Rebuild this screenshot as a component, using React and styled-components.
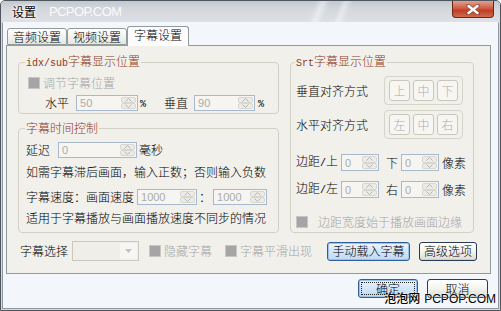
import React from 'react';
import styled, { createGlobalStyle } from 'styled-components';

const Global = createGlobalStyle`
  html, body { margin: 0; padding: 0; background: #ffffff; }
  body {
    width: 501px; height: 311px; overflow: hidden;
    font-family: "Noto Sans CJK SC", "Liberation Sans", sans-serif;
    font-size: 12px; line-height: 14px; color: #000; font-weight: 300;
  }
  * { box-sizing: border-box; }
`;

const Window = styled.div`
  position: relative;
  width: 501px;
  height: 311px;
  border: 1px solid #4f555d;
  border-radius: 5px 5px 0 0;
  background: #d5d9df;
  display: flex;
  flex-direction: column;
  overflow: hidden;
`;

const TitleBar = styled.div`
  flex: none;
  height: 21px;
  display: flex;
  align-items: center;
  padding-left: 11px;
  background:
    linear-gradient(112deg, transparent 62%, rgba(255,255,255,0.45) 63.5%, transparent 65%, transparent 67%, rgba(255,255,255,0.4) 68%, transparent 69.5%),
    linear-gradient(180deg, #c3c8cf 0%, #d3d7dc 35%, #dde0e4 100%);
`;

const TitleText = styled.span`
  font-size: 12px;
  font-weight: 400;
  color: #000;
  text-shadow: 0 0 2px #fff, 0 0 3px #fff, 0 0 4px #fff;
`;

const TitleMark = styled.span`
  margin-left: 13px;
  font-family: "Liberation Sans", sans-serif;
  font-size: 13px;
  font-weight: 400;
  letter-spacing: -0.6px;
  color: rgba(255, 255, 255, 0.9);
`;

const CloseButton = styled.div`
  margin-left: auto;
  margin-right: 6px;
  align-self: flex-start;
  width: 42px;
  height: 17px;
  border: 1px solid #6e2418;
  border-top: none;
  border-radius: 0 0 4px 4px;
  background: linear-gradient(180deg, #e3a08c 0%, #d1664c 40%, #bf3f25 60%, #d06a4f 100%);
  display: flex;
  align-items: center;
  justify-content: center;
`;

const ClientArea = styled.div`
  flex: 1;
  margin: 0 1px 1px;
  border: 1px solid #8f969f;
  border-top-color: #f4f6f9;
  background: #f3f6fb;
  padding: 3px 7px 0 3px;
  display: flex;
  flex-direction: column;
`;

const TabStrip = styled.div`
  flex: none;
  height: 19px;
  display: flex;
  align-items: flex-end;
  padding-left: 1px;
`;

const Tab = styled.div`
  flex: none;
  position: relative;
  height: ${p => (p.$active ? 20 : 17)}px;
  margin-bottom: ${p => (p.$active ? -1 : 0)}px;
  z-index: ${p => (p.$active ? 1 : 0)};
  padding: ${p => (p.$active ? '1px 6px 0' : '0 5px')};
  display: flex;
  align-items: ${p => (p.$active ? 'flex-start' : 'center')};
  border: 1px solid #919b9c;
  border-bottom: ${p => (p.$active ? 'none' : '1px solid #919b9c')};
  border-radius: 3px 3px 0 0;
  background: ${p => (p.$active ? '#fcfcfe' : 'linear-gradient(180deg, #ffffff 0%, #f0f0ec 60%, #e6e5df 100%)')};
  white-space: nowrap;
`;

const Panel = styled.div`
  flex: none;
  height: 229px;
  border: 1px solid #919b9c;
  background: #f1f0eb;
  padding: 8px 0 0 11px;
  display: grid;
  grid-template-columns: 261px 184px;
  grid-template-rows: 179px 20px;
  column-gap: 11px;
  row-gap: 8px;
  align-content: start;
`;

const LeftColumn = styled.div`
  display: flex;
  flex-direction: column;
  gap: 7px;
`;

const Group = styled.fieldset`
  margin: 0;
  min-width: 0;
  height: ${p => p.$h}px;
  padding: 0 ${p => p.$pl}px;
  border: 1px solid #d2d1c6;
  border-radius: 4px;
`;

const Legend = styled.legend`
  padding: 0 1px;
  font-size: 12px;
  line-height: 14px;
  color: #8e3a22;
`;

const Row = styled.div`
  display: flex;
  align-items: center;
  height: ${p => p.$h || 16}px;
  margin-top: ${p => p.$mt || 0}px;
`;

const Text = styled.span`
  flex: none;
  white-space: nowrap;
  margin-left: ${p => p.$ml || 0}px;
  color: ${p => (p.$disabled ? '#a6a6a6' : '#000')};
`;

const Half = styled.span`
  font-family: "Liberation Mono", monospace;
  font-size: 10px;
`;

const CheckBox = styled.span`
  flex: none;
  width: 12px;
  height: 12px;
  margin-left: ${p => p.$ml || 0}px;
  background: #a5a5a5;
  border: 1px solid #c6c6c6;
`;

const SpinBox = styled.div`
  flex: none;
  width: ${p => p.$w}px;
  height: 100%;
  margin-left: ${p => p.$ml || 0}px;
  border: 1px solid #a8b8cd;
  background: #f6f5f1;
  display: flex;
  align-items: stretch;
`;

const SpinValue = styled.span`
  flex: 1;
  padding-left: 3px;
  display: flex;
  align-items: center;
  font-family: "Liberation Sans", sans-serif;
  font-size: 11px;
  font-weight: 400;
  color: #ababab;
`;

const SpinArrows = styled.div`
  flex: none;
  width: 15px;
  margin: 1px;
  display: flex;
  flex-direction: column;
`;

const SpinHalf = styled.div`
  flex: 1;
  display: flex;
  align-items: center;
  justify-content: center;
  background: #ecebe6;
  border: 1px solid #d8d7cf;
  border-radius: 2px;
`;

const AlignFrame = styled.div`
  flex: none;
  height: 29px;
  margin-left: ${p => p.$ml || 0}px;
  padding: 3px 4px;
  display: flex;
  gap: 3px;
  border: 1px solid #d5d4c9;
  border-radius: 4px;
`;

const AlignBtn = styled.span`
  width: 21px;
  height: 21px;
  display: flex;
  align-items: center;
  justify-content: center;
  border: 1px solid #c9c7bb;
  border-radius: 3px;
  background: #f7f6f2;
  color: #adadad;
`;

const BottomRow = styled.div`
  grid-column: 1 / -1;
  display: flex;
  align-items: center;
`;

const Combo = styled.div`
  flex: none;
  width: ${p => p.$w}px;
  height: 20px;
  margin-left: ${p => p.$ml || 0}px;
  border: 1px solid #cbc9bd;
  background: #efeee9;
  display: flex;
  justify-content: flex-end;
`;

const ComboArrow = styled.span`
  width: 17px;
  margin: 1px;
  background: #f6f6f3;
  display: flex;
  align-items: center;
  justify-content: center;
`;

const PushButton = styled.div`
  flex: none;
  width: ${p => p.$w}px;
  height: 19px;
  margin-left: ${p => p.$ml || 0}px;
  display: flex;
  align-items: center;
  justify-content: center;
  color: #000;
  border: 1px solid ${p => (p.$hot ? '#2f5f9a' : '#2a3b55')};
  border-radius: 3px;
  background: ${p => (p.$hot
    ? 'linear-gradient(180deg, #eef5fd 0%, #d3e5f9 50%, #c0d8f4 100%)'
    : 'linear-gradient(180deg, #ffffff 0%, #f3f3ef 50%, #dcdcd6 100%)')};
  box-shadow: ${p => (p.$hot ? 'inset 0 0 0 1px #9cc2ec' : 'inset 0 -1px 0 #cfcfc8')};
  outline: ${p => (p.$focus ? '1px dotted #222' : 'none')};
  outline-offset: -4px;
  white-space: nowrap;
`;

const Footer = styled.div`
  flex: 1;
  display: flex;
  justify-content: flex-end;
  align-items: flex-start;
  padding: 5px 3px 0 0;
  gap: 9px;
`;

const Watermark = styled.div`
  position: absolute;
  right: 4px;
  bottom: 4px;
  display: flex;
  align-items: baseline;
  gap: 4px;
  color: #000;
  text-shadow: 0 0 1px #fff, 0 0 2px #fff;
  pointer-events: none;
`;

const WatermarkCn = styled.span`
  font-size: 12px;
  font-weight: 500;
`;

const WatermarkEn = styled.span`
  font-family: "Liberation Sans", sans-serif;
  font-size: 12px;
  font-weight: 400;
`;

const Up = () => (
  <svg width="7" height="4" viewBox="0 0 7 4">
    <path d="M0.5 3.5 L3.5 0.5 L6.5 3.5" fill="none" stroke="#b4b4b4" strokeWidth="1" />
  </svg>
);
const Down = () => (
  <svg width="7" height="4" viewBox="0 0 7 4">
    <path d="M0.5 0.5 L3.5 3.5 L6.5 0.5" fill="none" stroke="#b4b4b4" strokeWidth="1" />
  </svg>
);

const Spin = ({ w, ml, value }) => (
  <SpinBox $w={w} $ml={ml}>
    <SpinValue>{value}</SpinValue>
    <SpinArrows>
      <SpinHalf><Up /></SpinHalf>
      <SpinHalf><Down /></SpinHalf>
    </SpinArrows>
  </SpinBox>
);

const CloseX = () => (
  <svg width="14" height="11" viewBox="0 0 14 11">
    <path d="M2 1.5 L12 9.5 M12 1.5 L2 9.5" stroke="#6a3a30" strokeWidth="4" strokeLinecap="round" opacity="0.5" />
    <path d="M2.5 2 L11.5 9 M11.5 2 L2.5 9" stroke="#ffffff" strokeWidth="2.4" strokeLinecap="round" />
  </svg>
);

export default function App() {
  return (
    <>
      <Global />
      <Window>
        <TitleBar>
          <TitleText>设置</TitleText>
          <TitleMark>PCPOP.COM</TitleMark>
          <CloseButton><CloseX /></CloseButton>
        </TitleBar>
        <ClientArea>
          <TabStrip>
            <Tab>音频设置</Tab>
            <Tab>视频设置</Tab>
            <Tab $active>字幕设置</Tab>
          </TabStrip>
          <Panel>
            <LeftColumn>
              <Group $h={60} $pl={6}>
                <Legend><Half>idx/sub</Half>字幕显示位置</Legend>
                <Row $h={14} $mt={5}>
                  <CheckBox $ml={3} />
                  <Text $ml={3} $disabled>调节字幕位置</Text>
                </Row>
                <Row $h={16} $mt={5}>
                  <Text $ml={20}>水平</Text>
                  <Spin w={62} ml={7} value="50" />
                  <Text $ml={2}><Half>%</Half></Text>
                  <Text $ml={18}>垂直</Text>
                  <Spin w={61} ml={6} value="90" />
                  <Text $ml={3}><Half>%</Half></Text>
                </Row>
              </Group>
              <Group $h={112} $pl={6}>
                <Legend>字幕时间控制</Legend>
                <Row $h={16} $mt={7}>
                  <Text $ml={1}>延迟</Text>
                  <Spin w={79} ml={8} value="0" />
                  <Text $ml={2}>毫秒</Text>
                </Row>
                <Row $h={14} $mt={7}>
                  <Text $ml={1}>如需字幕滞后画面，输入正数；否则输入负数</Text>
                </Row>
                <Row $h={16} $mt={10}>
                  <Text $ml={1}>字幕速度：画面速度</Text>
                  <Spin w={60} ml={3} value="1000" />
                  <Text $ml={2}>：</Text>
                  <Spin w={54} ml={2} value="1000" />
                </Row>
                <Row $h={14} $mt={6}>
                  <Text $ml={1}>适用于字幕播放与画面播放速度不同步的情况</Text>
                </Row>
              </Group>
            </LeftColumn>
            <Group $h={179} $pl={4}>
              <Legend><Half>Srt</Half>字幕显示位置</Legend>
              <Row $h={29} $mt={5}>
                <Text $ml={1}>垂直对齐方式</Text>
                <AlignFrame $ml={16}>
                  <AlignBtn>上</AlignBtn>
                  <AlignBtn>中</AlignBtn>
                  <AlignBtn>下</AlignBtn>
                </AlignFrame>
              </Row>
              <Row $h={29} $mt={5}>
                <Text $ml={1}>水平对齐方式</Text>
                <AlignFrame $ml={16}>
                  <AlignBtn>左</AlignBtn>
                  <AlignBtn>中</AlignBtn>
                  <AlignBtn>右</AlignBtn>
                </AlignFrame>
              </Row>
              <Row $h={17} $mt={15}>
                <Text $ml={1}>边距<Half>/</Half>上</Text>
                <Spin w={38} ml={3} value="0" />
                <Text $ml={7}>下</Text>
                <Spin w={38} ml={3} value="0" />
                <Text $ml={3}>像素</Text>
              </Row>
              <Row $h={17} $mt={10}>
                <Text $ml={1}>边距<Half>/</Half>左</Text>
                <Spin w={38} ml={3} value="0" />
                <Text $ml={7}>右</Text>
                <Spin w={38} ml={3} value="0" />
                <Text $ml={3}>像素</Text>
              </Row>
              <Row $h={14} $mt={17}>
                <CheckBox $ml={1} />
                <Text $ml={10} $disabled>边距宽度始于播放画面边缘</Text>
              </Row>
            </Group>
            <BottomRow>
              <Text $ml={2}>字幕选择</Text>
              <Combo $w={67} $ml={4}>
                <ComboArrow>
                  <svg width="7" height="4" viewBox="0 0 7 4"><path d="M0 0 L7 0 L3.5 4 Z" fill="#c2c2c2" /></svg>
                </ComboArrow>
              </Combo>
              <CheckBox $ml={10} />
              <Text $ml={3} $disabled>隐藏字幕</Text>
              <CheckBox $ml={13} />
              <Text $ml={3} $disabled>字幕平滑出现</Text>
              <PushButton $w={83} $ml={15} $hot>手动载入字幕</PushButton>
              <PushButton $w={58} $ml={9}>高级选项</PushButton>
            </BottomRow>
          </Panel>
          <Footer>
            <PushButton $w={60} $hot $focus>确定</PushButton>
            <PushButton $w={61}>取消</PushButton>
          </Footer>
        </ClientArea>
        <Watermark>
          <WatermarkCn>泡泡网</WatermarkCn>
          <WatermarkEn>PCPOP.COM</WatermarkEn>
        </Watermark>
      </Window>
    </>
  );
}
